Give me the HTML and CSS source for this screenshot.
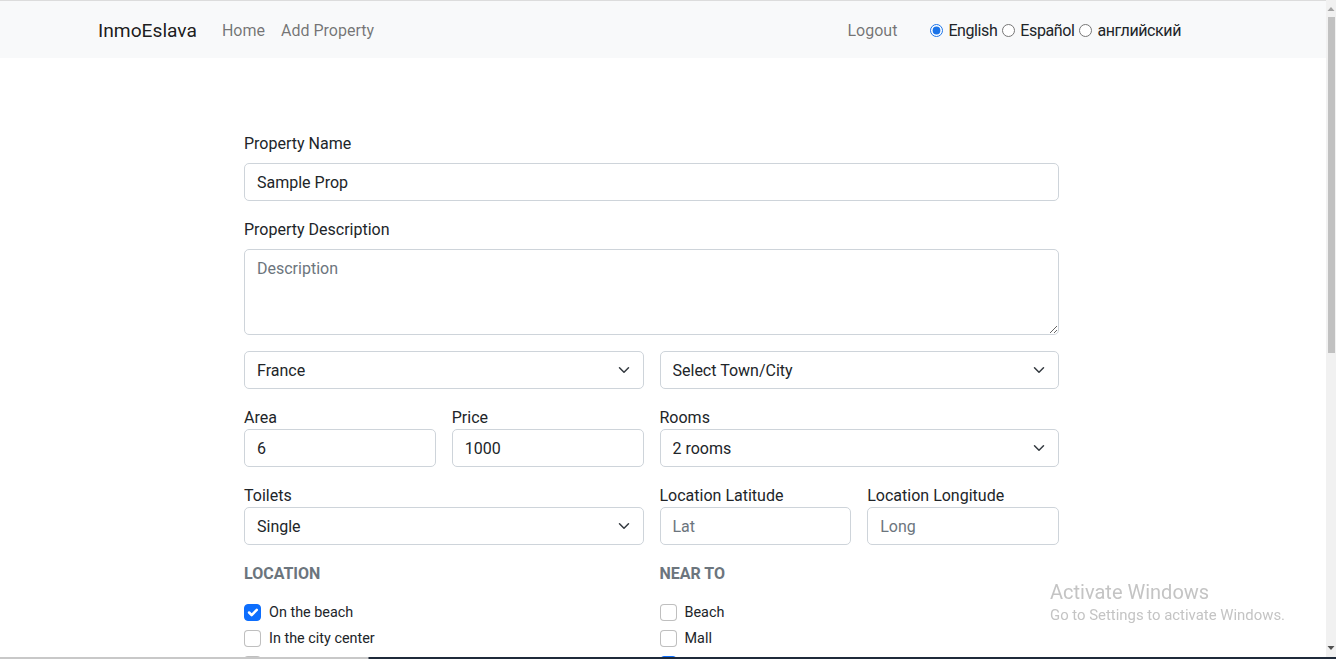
FILE: index.html
```html
<!DOCTYPE html>
<html lang="en">
<head>
<meta charset="utf-8">
<title>InmoEslava - Add Property</title>
<link rel="stylesheet" href="styles.css">
</head>
<body>
<div class="page">
  <nav class="navbar">
    <a class="brand" href="#">InmoEslava</a>
    <a class="nav-link first" href="#">Home</a>
    <a class="nav-link" href="#">Add Property</a>
    <a class="nav-link logout" href="#">Logout</a>
    <div class="langs">
      <input type="radio" name="lang" id="en" checked><label for="en">English</label>
      <input type="radio" name="lang" id="es"><label for="es">Español</label>
      <input type="radio" name="lang" id="ru"><label for="ru">английский</label>
    </div>
  </nav>

  <form class="form">
    <div class="field">
      <label class="lbl spaced">Property Name</label>
      <input class="control" type="text" value="Sample Prop">
    </div>
    <div class="field">
      <label class="lbl spaced">Property Description</label>
      <textarea class="control area-text" placeholder="Description"></textarea>
    </div>
    <div class="grid2 field">
      <div class="sel-wrap">
        <select class="control select"><option>France</option></select>
        <svg class="chev" width="12" height="12" viewBox="0 0 16 16"><path d="M2 5l6 6 6-6" fill="none" stroke="#343a40" stroke-width="2" stroke-linecap="round" stroke-linejoin="round"/></svg>
      </div>
      <div class="sel-wrap">
        <select class="control select"><option>Select Town/City</option></select>
        <svg class="chev" width="12" height="12" viewBox="0 0 16 16"><path d="M2 5l6 6 6-6" fill="none" stroke="#343a40" stroke-width="2" stroke-linecap="round" stroke-linejoin="round"/></svg>
      </div>
    </div>
    <div class="grid4 field">
      <div>
        <label class="lbl">Area</label>
        <input class="control" type="text" value="6">
      </div>
      <div>
        <label class="lbl">Price</label>
        <input class="control" type="text" value="1000">
      </div>
      <div class="span2">
        <label class="lbl">Rooms</label>
        <div class="sel-wrap">
          <select class="control select"><option>2 rooms</option></select>
          <svg class="chev" width="12" height="12" viewBox="0 0 16 16"><path d="M2 5l6 6 6-6" fill="none" stroke="#343a40" stroke-width="2" stroke-linecap="round" stroke-linejoin="round"/></svg>
        </div>
      </div>
    </div>
    <div class="grid4 field">
      <div class="span2">
        <label class="lbl">Toilets</label>
        <div class="sel-wrap">
          <select class="control select"><option>Single</option></select>
          <svg class="chev" width="12" height="12" viewBox="0 0 16 16"><path d="M2 5l6 6 6-6" fill="none" stroke="#343a40" stroke-width="2" stroke-linecap="round" stroke-linejoin="round"/></svg>
        </div>
      </div>
      <div>
        <label class="lbl">Location Latitude</label>
        <input class="control" type="text" placeholder="Lat">
      </div>
      <div>
        <label class="lbl">Location Longitude</label>
        <input class="control" type="text" placeholder="Long">
      </div>
    </div>
    <div class="grid2">
      <div>
        <h6 class="section">LOCATION</h6>
        <label class="check"><span class="box checked"><svg width="17" height="17" viewBox="0 0 20 20"><path d="M6 10l3 3l6-6" fill="none" stroke="#fff" stroke-width="3" stroke-linecap="round" stroke-linejoin="round"/></svg></span>On the beach</label>
        <label class="check"><span class="box"></span>In the city center</label>
        <label class="check"><span class="box"></span></label>
      </div>
      <div>
        <h6 class="section">NEAR TO</h6>
        <label class="check"><span class="box"></span>Beach</label>
        <label class="check"><span class="box"></span>Mall</label>
        <label class="check"><span class="box checked"><svg width="17" height="17" viewBox="0 0 20 20"><path d="M6 10l3 3l6-6" fill="none" stroke="#fff" stroke-width="3" stroke-linecap="round" stroke-linejoin="round"/></svg></span></label>
      </div>
    </div>
  </form>
</div>

<div class="watermark">
  <div class="wm-title">Activate Windows</div>
  <div class="wm-sub">Go to Settings to activate Windows.</div>
</div>

<div class="scrollbar">
  <svg class="arrow up" width="10" height="10" viewBox="0 0 10 10"><path d="M1.5 7h7L5 3z" fill="#a3a3a3"/></svg>
  <div class="thumb"></div>
  <svg class="arrow down" width="10" height="10" viewBox="0 0 10 10"><path d="M1.5 3h7L5 7z" fill="#505050"/></svg>
</div>
<div class="taskbar-edge"></div>
</body>
</html>
```

FILE: styles.css
```css
html, body {
  margin: 0;
  padding: 0;
  height: 659px;
  overflow: hidden;
  background: #fff;
}
body {
  font-family: Roboto, "Liberation Sans", sans-serif;
  color: #212529;
  font-size: 16px;
  line-height: 24px;
}
.page {
  width: 1326px;
}
.navbar {
  height: 58px;
  border-top: 1px solid #dcdcdc;
  background: #f8f9fa;
  display: flex;
  align-items: center;
  padding-left: 98px;
  padding-top: 2px;
  box-sizing: border-box;
}
.brand {
  font-size: 19.2px;
  line-height: 30px;
  color: rgba(0,0,0,.9);
  text-decoration: none;
  margin-right: 25px;
}
.nav-link {
  color: rgba(0,0,0,.55);
  text-decoration: none;
  margin-right: 16px;
}
.logout {
  margin-left: auto;
  margin-right: 28px;
}
.langs {
  display: flex;
  align-items: center;
  margin-right: 145px;
}
.langs input {
  width: 13px;
  height: 13px;
  margin: 0 5px 0 5px;
  accent-color: #1a73e8;
}
.langs label {
  color: #212529;
  letter-spacing: -0.4px;
}

.form {
  width: 815px;
  margin: 73px 0 0 244px;
}
.field { margin-bottom: 16px; }
.lbl {
  display: block;
  padding-top: 2px;
  line-height: 22px;
}
.lbl.spaced { margin-bottom: 8px; }
.control {
  display: block;
  width: 100%;
  box-sizing: border-box;
  height: 38px;
  padding: 6px 12px;
  font-family: inherit;
  font-size: 16px;
  line-height: 24px;
  color: #212529;
  background: #fff;
  border: 1px solid #ced4da;
  border-radius: 5px;
  outline: none;
}
.control::placeholder { color: #6c757d; }
.area-text {
  height: 86px;
  padding-top: 7px;
  resize: vertical;
}
.select {
  appearance: none;
  -webkit-appearance: none;
  padding: 7px 36px 5px 12px;
}
.sel-wrap { position: relative; }
.chev {
  position: absolute;
  right: 14px;
  top: 13px;
  pointer-events: none;
}
.grid2 {
  display: grid;
  grid-template-columns: 1fr 1fr;
  column-gap: 16px;
}
.grid4 {
  display: grid;
  grid-template-columns: repeat(4, 1fr);
  column-gap: 16px;
}
.span2 { grid-column: span 2; }
.section {
  margin: 0 0 14px 0;
  padding-top: 2px;
  font-size: 16px;
  line-height: 22px;
  font-weight: 700;
  color: #6c757d;
}
.check {
  display: flex;
  align-items: center;
  height: 26px;
  font-size: 14.4px;
  line-height: 21px;
  color: #212529;
}
.box {
  width: 17px;
  height: 17px;
  box-sizing: border-box;
  border: 1px solid rgba(0,0,0,.25);
  border-radius: 4px;
  margin-right: 8px;
  background: #fff;
  display: flex;
  flex: none;
}
.box.checked {
  background: #0d6efd;
  border-color: #0d6efd;
}
.box svg { margin: -1px; }

.watermark {
  position: fixed;
  left: 1050px;
  top: 579px;
  color: #c4c4c4;
  pointer-events: none;
}
.wm-title {
  font-size: 20px;
  line-height: 26px;
}
.wm-sub {
  font-size: 14.9px;
  line-height: 20px;
}
.scrollbar {
  position: fixed;
  top: 0;
  right: 0;
  width: 10px;
  height: 657px;
  background: #f1f1f1;
}
.arrow {
  position: absolute;
  left: 0;
}
.arrow.up { top: 4px; }
.arrow.down { bottom: 4px; }
.thumb {
  position: absolute;
  left: 2px;
  right: 1px;
  top: 17px;
  height: 336px;
  background: #c1c1c1;
}
.taskbar-edge {
  position: fixed;
  left: 0;
  right: 0;
  bottom: 0;
  height: 2px;
  background: linear-gradient(to right, #c8c8c8 0, #c8c8c8 368px, #1f2a3a 369px);
}
```
